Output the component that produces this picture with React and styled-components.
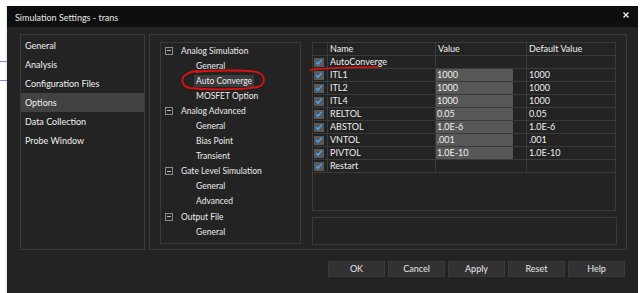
import React from "react";
import styled, { createGlobalStyle } from "styled-components";

const Global = createGlobalStyle`
  *, *::before, *::after { box-sizing: border-box; }
  html, body { margin: 0; padding: 0; background: #ffffff; overflow: hidden; }
  body { font-family: Lato, "Noto Sans", sans-serif; }
`;

const Page = styled.div`
  position: relative;
  display: flex;
  width: 640px;
  height: 293px;
  padding-top: 6px;
  overflow: hidden;
`;

const Margin = styled.div`
  width: 7px;
  flex: none;
  display: flex;
  flex-direction: column;
  padding-top: 55px;
  gap: 18px;
  background: linear-gradient(90deg, #ffffff 0, #ffffff 5px, #e6e6e6 7px);
`;

const StrayLine = styled.div`
  height: 1px;
  background: #8c7fe0;
`;

const Window = styled.div`
  width: 631px;
  flex: none;
  background: #232323;
  display: flex;
  flex-direction: column;
`;

const TitleBar = styled.div`
  height: 21px;
  background: #0e0e0e;
  display: flex;
  align-items: center;
  padding: 2px 9px 0 8px;
  color: #e6e6e6;
  font-size: 9px;
`;

const Title = styled.span`
  flex: 1;
`;

const CloseIcon = styled.svg`
  flex: none;
  margin-top: -6px;
`;

const Body = styled.div`
  display: flex;
  gap: 4px;
  padding: 7px 11px 0 13px;
`;

const Panel = styled.div`
  border: 1px solid #3a3a3a;
  height: 216px;
`;

const LeftPanel = styled(Panel)`
  width: 125px;
  padding-top: 1px;
`;

const NavItem = styled.div`
  height: 19px;
  line-height: 19px;
  padding-left: 4px;
  font-size: 9px;
  color: #f0f0f0;
  background: ${(p) => (p.$active ? "#424242" : "transparent")};
`;

const RightPanel = styled(Panel)`
  width: 478px;
  display: flex;
  gap: 11px;
  padding: 7px 9px 0 10px;
`;

const Tree = styled.div`
  width: 142px;
  height: 202px;
  border: 1px solid #3a3a3a;
`;

const TreeRow = styled.div`
  height: 15.1px;
  display: flex;
  align-items: center;
  padding-left: ${(p) => (p.$child ? "35px" : "4px")};
  font-size: 8.5px;
  color: #ebebeb;
`;

const Toggle = styled.span`
  width: 8px;
  height: 8px;
  border: 1px solid #8a8a8a;
  margin-right: 8px;
  position: relative;
  &::after {
    content: "";
    position: absolute;
    left: 1px;
    right: 1px;
    top: 2.5px;
    height: 1px;
    background: #bdbdbd;
  }
`;

const TreeLabel = styled.span`
  padding: 0 2px;
  margin-left: -2px;
  line-height: 12px;
  background: ${(p) => (p.$selected ? "#3c3c3c" : "transparent")};
`;

const Side = styled.div`
  display: flex;
  flex-direction: column;
  gap: 6px;
`;

const Table = styled.div`
  width: 304px;
  height: 169px;
  border: 1px solid #3a3a3a;
  display: grid;
  grid-template-columns: 15px 108px 91px 1fr;
  grid-auto-rows: 13px;
  align-content: start;
`;

const Cell = styled.div`
  border-right: 1px solid #3a3a3a;
  border-bottom: 1px solid #3a3a3a;
  font-size: 9px;
  color: #f0f0f0;
  line-height: 12px;
  padding-left: 2px;
  white-space: nowrap;
  overflow: hidden;
  &:nth-child(4n) { border-right: none; }
`;

const ValueCell = styled(Cell)`
  padding-left: 0;
`;

const ValueFill = styled.div`
  width: 77px;
  height: 13px;
  margin-bottom: -1px;
  padding-left: 1px;
  background: ${(p) => (p.$filled ? "#575757" : "transparent")};
`;

const CheckCell = styled(Cell)`
  padding-left: 1px;
  display: flex;
  align-items: center;
`;

const CheckBox = styled.span`
  width: 10px;
  height: 9px;
  background: #5a5a5a;
  display: flex;
  align-items: center;
  justify-content: center;
`;

const Description = styled.div`
  width: 305px;
  height: 28px;
  border: 1px solid #3a3a3a;
`;

const Buttons = styled.div`
  display: flex;
  gap: 3px;
  padding: 11px 0 0 321px;
`;

const Button = styled.div`
  width: 57px;
  height: 16px;
  background: #323232;
  border: 1px solid #3a3a3a;
  color: #e6e6e6;
  font-size: 9px;
  line-height: 14px;
  text-align: center;
`;

const Marks = styled.svg`
  position: absolute;
  left: 0;
  top: 0;
  pointer-events: none;
`;

const Check = () => (
  <svg width="8" height="8" viewBox="0 0 8 8">
    <path d="M1.2 4.3 L3 6.1 L6.8 1.6" fill="none" stroke="#3fa9ff" strokeWidth="1.4" />
  </svg>
);

const nav = ["General", "Analysis", "Configuration Files", "Options", "Data Collection", "Probe Window"];

const tree = [
  { label: "Analog Simulation" },
  { label: "General", child: true },
  { label: "Auto Converge", child: true, selected: true },
  { label: "MOSFET Option", child: true },
  { label: "Analog Advanced" },
  { label: "General", child: true },
  { label: "Bias Point", child: true },
  { label: "Transient", child: true },
  { label: "Gate Level Simulation" },
  { label: "General", child: true },
  { label: "Advanced", child: true },
  { label: "Output File" },
  { label: "General", child: true },
];

const rows = [
  ["AutoConverge", null, ""],
  ["ITL1", "1000", "1000"],
  ["ITL2", "1000", "1000"],
  ["ITL4", "1000", "1000"],
  ["RELTOL", "0.05", "0.05"],
  ["ABSTOL", "1.0E-6", "1.0E-6"],
  ["VNTOL", ".001", ".001"],
  ["PIVTOL", "1.0E-10", "1.0E-10"],
  ["Restart", null, ""],
];

export default function App() {
  return (
    <>
      <Global />
      <Page>
        <Margin>
          <StrayLine />
          <StrayLine />
        </Margin>
        <Window>
          <TitleBar>
            <Title>Simulation Settings - trans</Title>
            <CloseIcon width="6" height="6" viewBox="0 0 6 6">
              <path d="M0.5 0.5 L5.5 5.5 M5.5 0.5 L0.5 5.5" stroke="#f2f2f2" strokeWidth="1.3" />
            </CloseIcon>
          </TitleBar>
          <Body>
            <LeftPanel>
              {nav.map((n) => (
                <NavItem key={n} $active={n === "Options"}>{n}</NavItem>
              ))}
            </LeftPanel>
            <RightPanel>
              <Tree>
                {tree.map((t, i) => (
                  <TreeRow key={i} $child={t.child}>
                    {!t.child && <Toggle />}
                    <TreeLabel $selected={t.selected}>{t.label}</TreeLabel>
                  </TreeRow>
                ))}
              </Tree>
              <Side>
                <Table>
                  <Cell />
                  <Cell>Name</Cell>
                  <Cell>Value</Cell>
                  <Cell>Default Value</Cell>
                  {rows.map(([name, value, def]) => (
                    <React.Fragment key={name}>
                      <CheckCell>
                        <CheckBox><Check /></CheckBox>
                      </CheckCell>
                      <Cell>{name}</Cell>
                      <ValueCell>
                        <ValueFill $filled={value !== null}>{value}</ValueFill>
                      </ValueCell>
                      <Cell>{def}</Cell>
                    </React.Fragment>
                  ))}
                </Table>
                <Description />
              </Side>
            </RightPanel>
          </Body>
          <Buttons>
            {["OK", "Cancel", "Apply", "Reset", "Help"].map((b) => (
              <Button key={b}>{b}</Button>
            ))}
          </Buttons>
        </Window>
        <Marks width="640" height="293" viewBox="0 0 640 293">
          <path
            d="M196 72 C215 70 245 70 257 72 C266 75 266 84 258 87 C240 90 205 90 190 88 C181 86 180 78 187 74 C190 72 193 71 198 71"
            fill="none"
            stroke="#e01010"
            strokeWidth="1.8"
            strokeLinecap="round"
          />
          <path
            d="M310 70 C325 68 345 67 378 67"
            fill="none"
            stroke="#e01010"
            strokeWidth="1.6"
            strokeLinecap="round"
          />
        </Marks>
      </Page>
    </>
  );
}
